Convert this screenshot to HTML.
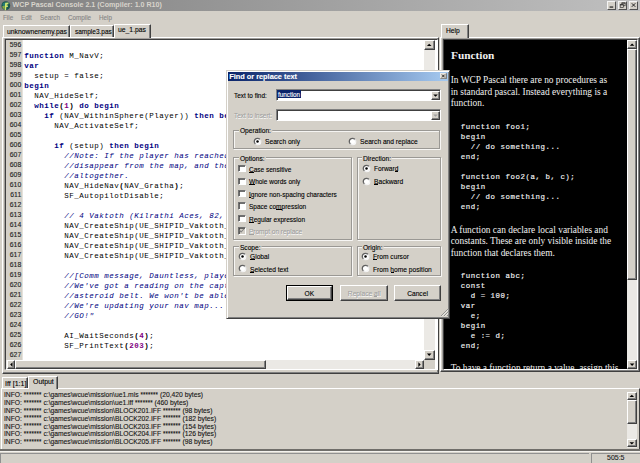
<!DOCTYPE html><html><head><meta charset="utf-8"><style>
*{margin:0;padding:0;box-sizing:border-box}
html,body{width:640px;height:463px;overflow:hidden;background:#d4d0c8;position:relative;font-family:"Liberation Sans",sans-serif}
.a{position:absolute}
.ui{font-family:"Liberation Sans",sans-serif;color:#000;white-space:pre;line-height:1;-webkit-text-stroke:0.12px currentColor}
.track{background:#ebe9e5}
.sbtn{background:#d4d0c8;border-top:1px solid #fff;border-left:1px solid #fff;border-right:1px solid #404040;border-bottom:1px solid #404040;box-shadow:inset -1px -1px 0 #808080}
.code{font-family:"Liberation Mono",monospace;font-size:7.5px;letter-spacing:0.5px;line-height:10px;white-space:pre;color:#000}
.k{color:#000080;font-weight:bold}
.c{color:#000080;font-style:italic}
.n{color:#800080;font-weight:bold}
.p{font-weight:bold}
.dis{color:#a0a0a0;text-shadow:0.5px 0.5px 0 #fff}
.mdis{color:#858585}
.help{font-family:"Liberation Serif",serif;color:#f0f0f0;white-space:pre}
.hcode{font-family:"Liberation Mono",monospace;font-size:7.4px;letter-spacing:0.55px;line-height:10px;color:#f4f4f4;white-space:pre;-webkit-text-stroke:0.15px #f4f4f4}
</style></head><body><svg width="0" height="0" style="position:absolute"><defs><linearGradient id="rg" x1="0" y1="0" x2="1" y2="1"><stop offset="0" stop-color="#505050"/><stop offset="0.45" stop-color="#707070"/><stop offset="0.6" stop-color="#e8e8e8"/><stop offset="1" stop-color="#fff"/></linearGradient></defs></svg><div class="a" style="left:0px;top:0px;width:640px;height:10.5px;background:linear-gradient(to right,#808080,#c0c0c0)"></div>
<svg class="a" style="left:1.2px;top:0.9px" width="11" height="10"><circle cx="4.8" cy="4.7" r="4.4" fill="#1a5550"/><circle cx="3.6" cy="3.6" r="2" fill="#2c8f86" opacity=".7"/><path d="M4.2 1.8 L7.6 1.6 L7.3 3.3 L5.8 3.4 L5.6 4.6 L7.0 4.5 L6.8 6 L5.4 6.1 L5.0 9.2 L3.6 9.2 Z" fill="#d0e870"/><path d="M1.2 5.2 L3.8 4.8 L3.5 8 L1.8 7.4 Z" fill="#a8c040" opacity=".8"/></svg>
<div class="a ui " style="left:12.6px;top:2.44px;font-size:7.1px;transform:scaleX(1.0);transform-origin:0 0;font-weight:bold;color:#d8d4cc;-webkit-text-stroke:0">WCP Pascal Console 2.1 (Compiler: 1.0 R10)</div>
<div class="a" style="left:607.2px;top:1.2px;width:9.3px;height:8.4px;background:#d4d0c8;border-top:1px solid #f4f4f4;border-left:1px solid #f4f4f4;border-right:1px solid #505050;border-bottom:1px solid #505050"></div>
<div class="a" style="left:617.7px;top:1.2px;width:9.3px;height:8.4px;background:#d4d0c8;border-top:1px solid #f4f4f4;border-left:1px solid #f4f4f4;border-right:1px solid #505050;border-bottom:1px solid #505050"></div>
<div class="a" style="left:628.7px;top:1.2px;width:9.3px;height:8.4px;background:#d4d0c8;border-top:1px solid #f4f4f4;border-left:1px solid #f4f4f4;border-right:1px solid #505050;border-bottom:1px solid #505050"></div>
<svg class="a" style="left:607.2px;top:1.2px" width="10" height="9"><rect x="2.6" y="5.5" width="3.6" height="1.1" fill="#101010"/></svg>
<svg class="a" style="left:617.7px;top:1.2px" width="10" height="9"><rect x="3.9" y="1.9" width="3.2" height="2.9" fill="none" stroke="#202020" stroke-width="0.6"/><rect x="3.6" y="1.7" width="3.8" height="0.8" fill="#202020"/><rect x="2.2" y="3.7" width="3.2" height="2.9" fill="#d4d0c8" stroke="#202020" stroke-width="0.6"/><rect x="1.9" y="3.5" width="3.8" height="0.8" fill="#202020"/></svg>
<svg class="a" style="left:628.7px;top:1.2px" width="10" height="9"><path d="M2.8 2.3 L6.3 5.8 M6.3 2.3 L2.8 5.8" stroke="#101010" stroke-width="0.9"/></svg>
<div class="a ui mdis" style="left:3.3px;top:13.80px;font-size:7.4px;transform:scaleX(0.85);transform-origin:0 0;">File</div>
<div class="a ui mdis" style="left:20.6px;top:13.80px;font-size:7.4px;transform:scaleX(0.85);transform-origin:0 0;">Edit</div>
<div class="a ui mdis" style="left:39.8px;top:13.80px;font-size:7.4px;transform:scaleX(0.85);transform-origin:0 0;">Search</div>
<div class="a ui mdis" style="left:67.9px;top:13.80px;font-size:7.4px;transform:scaleX(0.85);transform-origin:0 0;">Compile</div>
<div class="a ui mdis" style="left:98.5px;top:13.80px;font-size:7.4px;transform:scaleX(0.85);transform-origin:0 0;">Help</div>
<div class="a" style="left:2.3px;top:37.2px;width:437px;height:336.5px;border-top:1px solid #fff;border-left:1px solid #fff;border-right:1px solid #404040;border-bottom:1px solid #404040;box-shadow:inset -1px -1px 0 #808080"></div>
<div class="a" style="left:2.5px;top:25.2px;width:67.3px;height:11.8px;background:#d4d0c8;border-top:1px solid #fff;border-left:1px solid #fff;border-right:1px solid #404040;box-shadow:inset -1px 0 0 #808080"></div>
<div class="a ui " style="left:7.0px;top:27.80px;font-size:7.4px;transform:scaleX(0.919);transform-origin:0 0;">unknownenemy.pas</div>
<div class="a" style="left:70.3px;top:25.2px;width:43.5px;height:11.8px;background:#d4d0c8;border-top:1px solid #fff;border-left:1px solid #fff;border-right:1px solid #404040;box-shadow:inset -1px 0 0 #808080"></div>
<div class="a ui " style="left:74.8px;top:27.80px;font-size:7.4px;transform:scaleX(0.877);transform-origin:0 0;">sample3.pas</div>
<div class="a" style="left:113.8px;top:24px;width:37.2px;height:14.2px;background:#d4d0c8;border-top:1px solid #fff;border-left:1px solid #fff;border-right:1px solid #404040;box-shadow:inset -1px 0 0 #808080"></div>
<div class="a ui " style="left:118.1px;top:26.30px;font-size:7.4px;transform:scaleX(0.92);transform-origin:0 0;">ue_1.pas</div>
<div class="a" style="left:5px;top:38.9px;width:433px;height:331.3px;border-top:1px solid #404040;border-left:1px solid #404040;border-right:1px solid #fff;border-bottom:1px solid #fff;background:#fff;box-shadow:-0.6px -0.6px 0 #808080"></div>
<div class="a" style="left:6px;top:39.7px;width:16.6px;height:320.5px;background:#d4d0c8;border-right:1px solid #e4e2dc"></div>
<div class="a ui" style="left:6px;top:39.75px;width:15.2px;text-align:right;font-size:6.8px;line-height:10px;color:#202020">596</div>
<div class="a ui" style="left:6px;top:49.75px;width:15.2px;text-align:right;font-size:6.8px;line-height:10px;color:#202020">597</div>
<div class="a ui" style="left:6px;top:59.75px;width:15.2px;text-align:right;font-size:6.8px;line-height:10px;color:#202020">598</div>
<div class="a ui" style="left:6px;top:69.75px;width:15.2px;text-align:right;font-size:6.8px;line-height:10px;color:#202020">599</div>
<div class="a ui" style="left:6px;top:79.75px;width:15.2px;text-align:right;font-size:6.8px;line-height:10px;color:#202020">600</div>
<div class="a ui" style="left:6px;top:89.75px;width:15.2px;text-align:right;font-size:6.8px;line-height:10px;color:#202020">601</div>
<div class="a ui" style="left:6px;top:99.75px;width:15.2px;text-align:right;font-size:6.8px;line-height:10px;color:#202020">602</div>
<div class="a ui" style="left:6px;top:109.75px;width:15.2px;text-align:right;font-size:6.8px;line-height:10px;color:#202020">603</div>
<div class="a ui" style="left:6px;top:119.75px;width:15.2px;text-align:right;font-size:6.8px;line-height:10px;color:#202020">604</div>
<div class="a ui" style="left:6px;top:129.75px;width:15.2px;text-align:right;font-size:6.8px;line-height:10px;color:#202020">605</div>
<div class="a ui" style="left:6px;top:139.75px;width:15.2px;text-align:right;font-size:6.8px;line-height:10px;color:#202020">606</div>
<div class="a ui" style="left:6px;top:149.75px;width:15.2px;text-align:right;font-size:6.8px;line-height:10px;color:#202020">607</div>
<div class="a ui" style="left:6px;top:159.75px;width:15.2px;text-align:right;font-size:6.8px;line-height:10px;color:#202020">608</div>
<div class="a ui" style="left:6px;top:169.75px;width:15.2px;text-align:right;font-size:6.8px;line-height:10px;color:#202020">609</div>
<div class="a ui" style="left:6px;top:179.75px;width:15.2px;text-align:right;font-size:6.8px;line-height:10px;color:#202020">610</div>
<div class="a ui" style="left:6px;top:189.75px;width:15.2px;text-align:right;font-size:6.8px;line-height:10px;color:#202020">611</div>
<div class="a ui" style="left:6px;top:199.75px;width:15.2px;text-align:right;font-size:6.8px;line-height:10px;color:#202020">612</div>
<div class="a ui" style="left:6px;top:209.75px;width:15.2px;text-align:right;font-size:6.8px;line-height:10px;color:#202020">613</div>
<div class="a ui" style="left:6px;top:219.75px;width:15.2px;text-align:right;font-size:6.8px;line-height:10px;color:#202020">614</div>
<div class="a ui" style="left:6px;top:229.75px;width:15.2px;text-align:right;font-size:6.8px;line-height:10px;color:#202020">615</div>
<div class="a ui" style="left:6px;top:239.75px;width:15.2px;text-align:right;font-size:6.8px;line-height:10px;color:#202020">616</div>
<div class="a ui" style="left:6px;top:249.75px;width:15.2px;text-align:right;font-size:6.8px;line-height:10px;color:#202020">617</div>
<div class="a ui" style="left:6px;top:259.75px;width:15.2px;text-align:right;font-size:6.8px;line-height:10px;color:#202020">618</div>
<div class="a ui" style="left:6px;top:269.75px;width:15.2px;text-align:right;font-size:6.8px;line-height:10px;color:#202020">619</div>
<div class="a ui" style="left:6px;top:279.75px;width:15.2px;text-align:right;font-size:6.8px;line-height:10px;color:#202020">620</div>
<div class="a ui" style="left:6px;top:289.75px;width:15.2px;text-align:right;font-size:6.8px;line-height:10px;color:#202020">621</div>
<div class="a ui" style="left:6px;top:299.75px;width:15.2px;text-align:right;font-size:6.8px;line-height:10px;color:#202020">622</div>
<div class="a ui" style="left:6px;top:309.75px;width:15.2px;text-align:right;font-size:6.8px;line-height:10px;color:#202020">623</div>
<div class="a ui" style="left:6px;top:319.75px;width:15.2px;text-align:right;font-size:6.8px;line-height:10px;color:#202020">624</div>
<div class="a ui" style="left:6px;top:329.75px;width:15.2px;text-align:right;font-size:6.8px;line-height:10px;color:#202020">625</div>
<div class="a ui" style="left:6px;top:339.75px;width:15.2px;text-align:right;font-size:6.8px;line-height:10px;color:#202020">626</div>
<div class="a ui" style="left:6px;top:349.75px;width:15.2px;text-align:right;font-size:6.8px;line-height:10px;color:#202020">627</div>
<div class="a" style="left:23px;top:39.7px;width:401px;height:320.5px;overflow:hidden"><div class="code" style="padding-left:1.2px;padding-top:1.3px;line-height:10px">
<span class="k">function</span> M_NavV;
<span class="k">var</span>
  setup = false;
<span class="k">begin</span>
  NAV_HideSelf;
  <span class="k">while</span><span class="p">(</span><span class="n">1</span><span class="p">)</span> <span class="k">do</span> <span class="k">begin</span>
    <span class="k">if</span> (NAV_WithinSphere(Player)) <span class="k">then</span> <span class="k">begin</span>
      NAV_ActivateSelf;

      <span class="k">if</span> (setup) <span class="k">then</span> <span class="k">begin</span>
        <span class="c">//Note: If the player has reached the nav point, then</span>
        <span class="c">//disappear from the map, and the nav point</span>
        <span class="c">//altogether.</span>
        NAV_HideNav<span class="p">(</span>NAV_Gratha<span class="p">)</span>;
        SF_AutopilotDisable;

        <span class="c">// 4 Vaktoth (Kilrathi Aces, 82, 85, 87, 89)</span>
        NAV_CreateShip(UE_SHIPID_Vaktoth_1, 1);
        NAV_CreateShip(UE_SHIPID_Vaktoth_2, 1);
        NAV_CreateShip(UE_SHIPID_Vaktoth_3, 1);
        NAV_CreateShip(UE_SHIPID_Vaktoth_4, 1);

        <span class="c">//[Comm message, Dauntless, player]</span>
        <span class="c">//We&#x27;ve got a reading on the captain&#x27;s</span>
        <span class="c">//asteroid belt. We won&#x27;t be able to</span>
        <span class="c">//We&#x27;re updating your nav map...</span>
        <span class="c">//GO!&quot;</span>

        AI_WaitSeconds<span class="p">(</span><span class="n">4</span><span class="p">)</span>;
        SF_PrintText<span class="p">(</span><span class="n">203</span><span class="p">)</span>;
</div></div>
<div class="a track" style="left:424.2px;top:39.7px;width:10.4px;height:320.5px;"></div>
<div class="a sbtn" style="left:424.2px;top:39.7px;width:10.4px;height:10px;"></div><svg class="a" style="left:424.2px;top:39.7px" width="10.4" height="10"><polygon points="2.9000000000000004,6.1 7.5,6.1 5.2,3.8" fill="#000"/></svg>
<div class="a sbtn" style="left:424.2px;top:350.3px;width:10.4px;height:9.4px;"></div><svg class="a" style="left:424.2px;top:350.3px" width="10.4" height="9.4"><polygon points="2.9000000000000004,3.6 7.5,3.6 5.2,5.9" fill="#000"/></svg>
<div class="a track" style="left:6px;top:359.7px;width:418.2px;height:9.4px;"></div>
<div class="a sbtn" style="left:6.5px;top:359.7px;width:8.8px;height:9.2px;"></div><svg class="a" style="left:6.5px;top:359.7px" width="8.8" height="9.2"><polygon points="5.5,2.3 5.5,6.8999999999999995 3.2,4.6" fill="#000"/></svg>
<div class="a sbtn" style="left:15.3px;top:359.7px;width:250.5px;height:9.2px;"></div>
<div class="a sbtn" style="left:415.3px;top:359.7px;width:8.9px;height:9.2px;"></div><svg class="a" style="left:415.3px;top:359.7px" width="8.9" height="9.2"><polygon points="3.35,2.3 3.35,6.8999999999999995 5.65,4.6" fill="#000"/></svg>
<div class="a" style="left:424.2px;top:359.7px;width:10.4px;height:9.4px;background:#d4d0c8"></div>
<div class="a" style="left:440.3px;top:37.2px;width:199.5px;height:335px;border-top:1px solid #fff;border-left:1px solid #fff;border-right:1px solid #404040;border-bottom:1px solid #404040;box-shadow:inset -1px -1px 0 #808080"></div>
<div class="a" style="left:440.6px;top:24.2px;width:28.4px;height:14px;background:#d4d0c8;border-top:1px solid #fff;border-left:1px solid #fff;border-right:1px solid #404040;box-shadow:inset -1px 0 0 #808080"></div>
<div class="a ui " style="left:445.5px;top:26.50px;font-size:7.4px;transform:scaleX(0.9);transform-origin:0 0;">Help</div>
<div class="a" style="left:443px;top:38.9px;width:195px;height:331px;border-top:1px solid #404040;border-left:1px solid #404040;border-right:1px solid #fff;border-bottom:1px solid #fff;background:#000;box-shadow:-0.6px -0.6px 0 #808080"></div>
<div class="a" style="left:444px;top:39.7px;width:182.5px;height:330px;overflow:hidden"><div style="position:absolute;left:-444px;top:-39.7px;width:640px;height:463px"><div class="a help" style="left:451px;top:50.3px;font-size:11.3px;font-weight:bold;line-height:1">Function</div><div class="a help" style="left:450.7px;top:76.30px;font-size:9.4px;line-height:1">In WCP Pascal there are no procedures as</div><div class="a help" style="left:450.7px;top:87.80px;font-size:9.4px;line-height:1">in standard pascal. Instead everything is a</div><div class="a help" style="left:450.7px;top:99.30px;font-size:9.4px;line-height:1">function.</div><div class="a hcode" style="left:460.7px;top:121.60px">function foo1;</div><div class="a hcode" style="left:460.7px;top:131.60px">begin</div><div class="a hcode" style="left:460.7px;top:141.60px">  // do something...</div><div class="a hcode" style="left:460.7px;top:151.60px">end;</div><div class="a hcode" style="left:460.7px;top:171.60px">function foo2(a, b, c);</div><div class="a hcode" style="left:460.7px;top:181.60px">begin</div><div class="a hcode" style="left:460.7px;top:191.60px">  // do something...</div><div class="a hcode" style="left:460.7px;top:201.60px">end;</div><div class="a help" style="left:450.7px;top:225.50px;font-size:9.4px;line-height:1">A function can declare local variables and</div><div class="a help" style="left:450.7px;top:237.25px;font-size:9.4px;line-height:1">constants. These are only visible inside the</div><div class="a help" style="left:450.7px;top:249.00px;font-size:9.4px;line-height:1">function that declares them.</div><div class="a hcode" style="left:460.7px;top:271.00px">function abc;</div><div class="a hcode" style="left:460.7px;top:281.00px">const</div><div class="a hcode" style="left:460.7px;top:291.00px">  d = 100;</div><div class="a hcode" style="left:460.7px;top:301.00px">var</div><div class="a hcode" style="left:460.7px;top:311.00px">  e;</div><div class="a hcode" style="left:460.7px;top:321.00px">begin</div><div class="a hcode" style="left:460.7px;top:331.00px">  e := d;</div><div class="a hcode" style="left:460.7px;top:341.00px">end;</div><div class="a help" style="left:450.7px;top:364.40px;font-size:9.4px;line-height:1">To have a function return a value, assign this</div></div></div>
<div class="a track" style="left:626.6px;top:39.7px;width:10.2px;height:330px;"></div>
<div class="a sbtn" style="left:626.6px;top:39.7px;width:10.2px;height:9.4px;"></div><svg class="a" style="left:626.6px;top:39.7px" width="10.2" height="9.4"><polygon points="2.8,5.800000000000001 7.3999999999999995,5.800000000000001 5.1,3.5" fill="#000"/></svg>
<div class="a sbtn" style="left:626.6px;top:49.1px;width:10.2px;height:230.7px;"></div>
<div class="a sbtn" style="left:626.6px;top:359.6px;width:10.2px;height:9.4px;"></div><svg class="a" style="left:626.6px;top:359.6px" width="10.2" height="9.4"><polygon points="2.8,3.6 7.3999999999999995,3.6 5.1,5.9" fill="#000"/></svg>
<div class="a" style="left:0.6px;top:388px;width:639.4px;height:62px;border-top:1px solid #fff;border-left:1px solid #fff;border-right:1px solid #404040"></div>
<div class="a" style="left:1.6px;top:377.2px;width:26.4px;height:11px;background:#d4d0c8;border-top:1px solid #fff;border-left:1px solid #fff;border-right:1px solid #404040;box-shadow:inset -1px 0 0 #808080"></div>
<div class="a ui " style="left:4.9px;top:379.50px;font-size:7.4px;transform:scaleX(0.95);transform-origin:0 0;">Iff [1:1]</div>
<div class="a" style="left:28.4px;top:375.8px;width:29.6px;height:12.8px;background:#d4d0c8;border-top:1px solid #fff;border-left:1px solid #fff;border-right:1px solid #404040;box-shadow:inset -1px 0 0 #808080"></div>
<div class="a ui " style="left:32.8px;top:378.40px;font-size:7.4px;transform:scaleX(0.936);transform-origin:0 0;">Output</div>
<div class="a ui " style="left:3.8px;top:391.10px;font-size:7.4px;transform:scaleX(0.912);transform-origin:0 0;color:#141414">INFO: <span style="font-size:6.6px;letter-spacing:0.2px;position:relative;top:-0.3px">*******</span> c:\games\wcue\mission\ue1.mis <span style="font-size:6.6px;letter-spacing:0.2px;position:relative;top:-0.3px">*******</span> (20,420 bytes)</div>
<div class="a ui " style="left:3.8px;top:398.95px;font-size:7.4px;transform:scaleX(0.912);transform-origin:0 0;color:#141414">INFO: <span style="font-size:6.6px;letter-spacing:0.2px;position:relative;top:-0.3px">*******</span> c:\games\wcue\mission\ue1.iff <span style="font-size:6.6px;letter-spacing:0.2px;position:relative;top:-0.3px">*******</span> (460 bytes)</div>
<div class="a ui " style="left:3.8px;top:406.80px;font-size:7.4px;transform:scaleX(0.912);transform-origin:0 0;color:#141414">INFO: <span style="font-size:6.6px;letter-spacing:0.2px;position:relative;top:-0.3px">*******</span> c:\games\wcue\mission\BLOCK201.IFF <span style="font-size:6.6px;letter-spacing:0.2px;position:relative;top:-0.3px">*******</span> (98 bytes)</div>
<div class="a ui " style="left:3.8px;top:414.65px;font-size:7.4px;transform:scaleX(0.912);transform-origin:0 0;color:#141414">INFO: <span style="font-size:6.6px;letter-spacing:0.2px;position:relative;top:-0.3px">*******</span> c:\games\wcue\mission\BLOCK202.IFF <span style="font-size:6.6px;letter-spacing:0.2px;position:relative;top:-0.3px">*******</span> (182 bytes)</div>
<div class="a ui " style="left:3.8px;top:422.50px;font-size:7.4px;transform:scaleX(0.912);transform-origin:0 0;color:#141414">INFO: <span style="font-size:6.6px;letter-spacing:0.2px;position:relative;top:-0.3px">*******</span> c:\games\wcue\mission\BLOCK203.IFF <span style="font-size:6.6px;letter-spacing:0.2px;position:relative;top:-0.3px">*******</span> (154 bytes)</div>
<div class="a ui " style="left:3.8px;top:430.35px;font-size:7.4px;transform:scaleX(0.912);transform-origin:0 0;color:#141414">INFO: <span style="font-size:6.6px;letter-spacing:0.2px;position:relative;top:-0.3px">*******</span> c:\games\wcue\mission\BLOCK204.IFF <span style="font-size:6.6px;letter-spacing:0.2px;position:relative;top:-0.3px">*******</span> (126 bytes)</div>
<div class="a ui " style="left:3.8px;top:438.20px;font-size:7.4px;transform:scaleX(0.912);transform-origin:0 0;color:#141414">INFO: <span style="font-size:6.6px;letter-spacing:0.2px;position:relative;top:-0.3px">*******</span> c:\games\wcue\mission\BLOCK205.IFF <span style="font-size:6.6px;letter-spacing:0.2px;position:relative;top:-0.3px">*******</span> (98 bytes)</div>
<div class="a track" style="left:627.3px;top:392px;width:9.6px;height:55.5px;"></div>
<div class="a sbtn" style="left:627.3px;top:392px;width:9.6px;height:8px;"></div><svg class="a" style="left:627.3px;top:392px" width="9.6" height="8"><polygon points="2.5,5.1 7.1,5.1 4.8,2.8" fill="#000"/></svg>
<div class="a sbtn" style="left:627.3px;top:400px;width:9.6px;height:24.2px;"></div>
<div class="a sbtn" style="left:627.3px;top:438.8px;width:9.6px;height:8.5px;"></div><svg class="a" style="left:627.3px;top:438.8px" width="9.6" height="8.5"><polygon points="2.5,3.15 7.1,3.15 4.8,5.45" fill="#000"/></svg>
<div class="a" style="left:0px;top:449.2px;width:640px;height:1.8px;background:#706e6a"></div>
<div class="a" style="left:0px;top:451.2px;width:640px;height:1px;background:#f4f2ee"></div>
<div class="a" style="left:0.3px;top:452.6px;width:589px;height:11px;border-top:1px solid #909090;border-left:1px solid #909090"></div>
<div class="a" style="left:590.8px;top:452.6px;width:50px;height:11px;border-top:1px solid #909090;border-left:1px solid #909090"></div>
<div class="a ui " style="left:606.9px;top:454.10px;font-size:7.4px;transform:scaleX(0.945);transform-origin:0 0;color:#202020">505:5</div>
<div class="a" style="left:226px;top:69.7px;width:224px;height:249px;background:#d4d0c8;border-top:1px solid #d4d0c8;border-left:1px solid #d4d0c8;border-right:1px solid #404040;border-bottom:1px solid #404040;box-shadow:inset 1px 1px 0 #fff,inset -1px -1px 0 #808080"></div><div class="a" style="left:228.2px;top:71.7px;width:219.5px;height:9.2px;background:linear-gradient(to right,#0a246a,#a6caf0)"></div><div class="a ui " style="left:229.2px;top:72.82px;font-size:7.37px;transform:scaleX(1.0);transform-origin:0 0;font-weight:bold;color:#fff">Find or replace text</div><svg class="a" style="left:440.4px;top:72.6px" width="7" height="6.5"><rect x="0" y="0" width="6.6" height="6.1" fill="#d4d0c8"/><path d="M0.3 5.9 V0.3 H6.4" stroke="#fff" stroke-width="0.6" fill="none"/><path d="M0.2 5.8 H6.3 V0.2" stroke="#404040" stroke-width="0.7" fill="none"/><path d="M2 1.7 L4.6 4.3 M4.6 1.7 L2 4.3" stroke="#000" stroke-width="0.75"/></svg><div class="a ui " style="left:234.2px;top:91.80px;font-size:7.4px;transform:scaleX(0.867);transform-origin:0 0;">Text to find:</div><div class="a ui dis" style="left:234.2px;top:112.30px;font-size:7.4px;transform:scaleX(0.867);transform-origin:0 0;">Text to insert:</div><div class="a" style="left:275.8px;top:89.2px;width:165.5px;height:11.7px;background:#fff;border-top:1px solid #808080;border-left:1px solid #808080;border-right:1px solid #fff;border-bottom:1px solid #fff;box-shadow:inset 1px 1px 0 #404040"></div><div class="a" style="left:277.4px;top:90.3px;width:23.6px;height:8.2px;background:#0a246a"></div><div class="a ui " style="left:277.8px;top:91.00px;font-size:7.4px;transform:scaleX(0.855);transform-origin:0 0;color:#fff">function</div><div class="a sbtn" style="left:431.2px;top:90.6px;width:9.1px;height:9.1px;"></div><svg class="a" style="left:431.2px;top:90.6px" width="9.1" height="9.1"><polygon points="2.25,3.4499999999999997 6.85,3.4499999999999997 4.55,5.75" fill="#000"/></svg><div class="a" style="left:275.8px;top:109.4px;width:165.5px;height:11.7px;background:#fff;border-top:1px solid #808080;border-left:1px solid #808080;border-right:1px solid #fff;border-bottom:1px solid #fff;box-shadow:inset 1px 1px 0 #404040"></div><div class="a sbtn" style="left:431.2px;top:110.8px;width:9.1px;height:9.1px;"></div><svg class="a" style="left:431.2px;top:110.8px" width="9.1" height="9.1"><polygon points="2.25,3.4499999999999997 6.85,3.4499999999999997 4.55,5.75" fill="#a0a0a0"/></svg><div class="a" style="left:233.3px;top:130.2px;width:207.2px;height:19.100000000000023px;border:1px solid #9a9894;box-shadow:0.8px 0.8px 0 #fff,inset 0.8px 0.8px 0 #fff"></div><div class="a ui " style="left:238.9px;top:127.40px;font-size:7.4px;transform:scaleX(0.9);transform-origin:0 0;background:#d4d0c8;padding:0 1px">Operation:</div><div class="a" style="left:233.3px;top:157.3px;width:119.19999999999999px;height:83.0px;border:1px solid #9a9894;box-shadow:0.8px 0.8px 0 #fff,inset 0.8px 0.8px 0 #fff"></div><div class="a ui " style="left:238.9px;top:154.80px;font-size:7.4px;transform:scaleX(0.9);transform-origin:0 0;background:#d4d0c8;padding:0 1px">Options:</div><div class="a" style="left:356.8px;top:157.3px;width:84.0px;height:83.0px;border:1px solid #9a9894;box-shadow:0.8px 0.8px 0 #fff,inset 0.8px 0.8px 0 #fff"></div><div class="a ui " style="left:362.40000000000003px;top:154.80px;font-size:7.4px;transform:scaleX(0.9);transform-origin:0 0;background:#d4d0c8;padding:0 1px">Direction:</div><div class="a" style="left:233.3px;top:246.3px;width:119.19999999999999px;height:29.899999999999977px;border:1px solid #9a9894;box-shadow:0.8px 0.8px 0 #fff,inset 0.8px 0.8px 0 #fff"></div><div class="a ui " style="left:238.9px;top:243.90px;font-size:7.4px;transform:scaleX(0.9);transform-origin:0 0;background:#d4d0c8;padding:0 1px">Scope:</div><div class="a" style="left:356.8px;top:246.3px;width:84.0px;height:29.899999999999977px;border:1px solid #9a9894;box-shadow:0.8px 0.8px 0 #fff,inset 0.8px 0.8px 0 #fff"></div><div class="a ui " style="left:362.40000000000003px;top:243.90px;font-size:7.4px;transform:scaleX(0.9);transform-origin:0 0;background:#d4d0c8;padding:0 1px">Origin:</div><svg class="a" style="left:252.89999999999998px;top:136.5px" width="9" height="9"><circle cx="4.5" cy="4.5" r="3.0" fill="#fff"/><circle cx="4.5" cy="4.5" r="3.2" fill="none" stroke="url(#rg)" stroke-width="1.3"/><circle cx="4.5" cy="4.5" r="1.25" fill="#000"/></svg><div class="a ui " style="left:265.0px;top:138.10px;font-size:7.4px;transform:scaleX(0.9);transform-origin:0 0;">Search only</div><svg class="a" style="left:347.9px;top:136.5px" width="9" height="9"><circle cx="4.5" cy="4.5" r="3.0" fill="#fff"/><circle cx="4.5" cy="4.5" r="3.2" fill="none" stroke="url(#rg)" stroke-width="1.3"/></svg><div class="a ui " style="left:360.0px;top:138.10px;font-size:7.4px;transform:scaleX(0.9);transform-origin:0 0;">Search and replace</div><div class="a" style="left:238.4px;top:165.1px;width:7.2px;height:7.2px;background:#fff;border-top:1px solid #707070;border-left:1px solid #707070;border-right:1px solid #fff;border-bottom:1px solid #fff;box-shadow:inset 0.8px 0.8px 0 #404040"></div><div class="a ui " style="left:249.3px;top:165.80px;font-size:7.4px;transform:scaleX(0.88);transform-origin:0 0;">Case sensitive</div><div class="a" style="left:249.30px;top:171.75px;width:4.70px;height:0.75px;background:#000"></div><div class="a" style="left:238.4px;top:177.54999999999998px;width:7.2px;height:7.2px;background:#fff;border-top:1px solid #707070;border-left:1px solid #707070;border-right:1px solid #fff;border-bottom:1px solid #fff;box-shadow:inset 0.8px 0.8px 0 #404040"></div><div class="a ui " style="left:249.3px;top:178.25px;font-size:7.4px;transform:scaleX(0.88);transform-origin:0 0;">Whole words only</div><div class="a" style="left:249.30px;top:184.20px;width:6.15px;height:0.75px;background:#000"></div><div class="a" style="left:238.4px;top:190.0px;width:7.2px;height:7.2px;background:#fff;border-top:1px solid #707070;border-left:1px solid #707070;border-right:1px solid #fff;border-bottom:1px solid #fff;box-shadow:inset 0.8px 0.8px 0 #404040"></div><div class="a ui " style="left:249.3px;top:190.70px;font-size:7.4px;transform:scaleX(0.88);transform-origin:0 0;">Ignore non-spacing characters</div><div class="a" style="left:249.30px;top:196.65px;width:1.81px;height:0.75px;background:#000"></div><div class="a" style="left:238.4px;top:202.45px;width:7.2px;height:7.2px;background:#fff;border-top:1px solid #707070;border-left:1px solid #707070;border-right:1px solid #fff;border-bottom:1px solid #fff;box-shadow:inset 0.8px 0.8px 0 #404040"></div><div class="a ui " style="left:249.3px;top:203.15px;font-size:7.4px;transform:scaleX(0.88);transform-origin:0 0;">Space compression</div><div class="a" style="left:276.45px;top:209.10px;width:5.42px;height:0.75px;background:#000"></div><div class="a" style="left:238.4px;top:214.9px;width:7.2px;height:7.2px;background:#fff;border-top:1px solid #707070;border-left:1px solid #707070;border-right:1px solid #fff;border-bottom:1px solid #fff;box-shadow:inset 0.8px 0.8px 0 #404040"></div><div class="a ui " style="left:249.3px;top:215.60px;font-size:7.4px;transform:scaleX(0.88);transform-origin:0 0;">Regular expression</div><div class="a" style="left:249.30px;top:221.55px;width:4.70px;height:0.75px;background:#000"></div><div class="a" style="left:238.4px;top:227.35px;width:7.2px;height:7.2px;background:#d4d0c8;border-top:1px solid #707070;border-left:1px solid #707070;border-right:1px solid #fff;border-bottom:1px solid #fff;box-shadow:inset 0.8px 0.8px 0 #404040"></div><svg class="a" style="left:238.4px;top:227.35px" width="8" height="8"><path d="M1.6 3.4 L3.1 5 L5.8 2" stroke="#808080" stroke-width="1.1" fill="none"/></svg><div class="a ui dis" style="left:249.3px;top:228.05px;font-size:7.4px;transform:scaleX(0.88);transform-origin:0 0;">Prompt on replace</div><div class="a" style="left:249.30px;top:234.00px;width:4.34px;height:0.75px;background:#a0a0a0"></div><svg class="a" style="left:361.8px;top:163.7px" width="9" height="9"><circle cx="4.5" cy="4.5" r="3.0" fill="#fff"/><circle cx="4.5" cy="4.5" r="3.2" fill="none" stroke="url(#rg)" stroke-width="1.3"/><circle cx="4.5" cy="4.5" r="1.25" fill="#000"/></svg><div class="a ui " style="left:373.90000000000003px;top:165.30px;font-size:7.4px;transform:scaleX(0.9);transform-origin:0 0;">Forward</div><div class="a" style="left:394.62px;top:171.25px;width:3.70px;height:0.75px;background:#000"></div><svg class="a" style="left:361.8px;top:176.5px" width="9" height="9"><circle cx="4.5" cy="4.5" r="3.0" fill="#fff"/><circle cx="4.5" cy="4.5" r="3.2" fill="none" stroke="url(#rg)" stroke-width="1.3"/></svg><div class="a ui " style="left:373.90000000000003px;top:178.10px;font-size:7.4px;transform:scaleX(0.9);transform-origin:0 0;">Backward</div><div class="a" style="left:373.90px;top:184.05px;width:4.44px;height:0.75px;background:#000"></div><svg class="a" style="left:237.8px;top:251.7px" width="9" height="9"><circle cx="4.5" cy="4.5" r="3.0" fill="#fff"/><circle cx="4.5" cy="4.5" r="3.2" fill="none" stroke="url(#rg)" stroke-width="1.3"/><circle cx="4.5" cy="4.5" r="1.25" fill="#000"/></svg><div class="a ui " style="left:249.9px;top:253.30px;font-size:7.4px;transform:scaleX(0.9);transform-origin:0 0;">Global</div><div class="a" style="left:249.90px;top:259.25px;width:5.18px;height:0.75px;background:#000"></div><svg class="a" style="left:237.8px;top:264.0px" width="9" height="9"><circle cx="4.5" cy="4.5" r="3.0" fill="#fff"/><circle cx="4.5" cy="4.5" r="3.2" fill="none" stroke="url(#rg)" stroke-width="1.3"/></svg><div class="a ui " style="left:249.9px;top:265.60px;font-size:7.4px;transform:scaleX(0.9);transform-origin:0 0;">Selected text</div><div class="a" style="left:249.90px;top:271.55px;width:4.44px;height:0.75px;background:#000"></div><svg class="a" style="left:361.3px;top:251.7px" width="9" height="9"><circle cx="4.5" cy="4.5" r="3.0" fill="#fff"/><circle cx="4.5" cy="4.5" r="3.2" fill="none" stroke="url(#rg)" stroke-width="1.3"/><circle cx="4.5" cy="4.5" r="1.25" fill="#000"/></svg><div class="a ui " style="left:373.40000000000003px;top:253.30px;font-size:7.4px;transform:scaleX(0.9);transform-origin:0 0;">From cursor</div><div class="a" style="left:373.40px;top:259.25px;width:4.07px;height:0.75px;background:#000"></div><svg class="a" style="left:361.3px;top:264.0px" width="9" height="9"><circle cx="4.5" cy="4.5" r="3.0" fill="#fff"/><circle cx="4.5" cy="4.5" r="3.2" fill="none" stroke="url(#rg)" stroke-width="1.3"/></svg><div class="a ui " style="left:373.40000000000003px;top:265.60px;font-size:7.4px;transform:scaleX(0.9);transform-origin:0 0;">From home position</div><div class="a" style="left:390.79px;top:271.55px;width:3.70px;height:0.75px;background:#000"></div><div class="a" style="left:286px;top:285.3px;width:47px;height:15.5px;border:1px solid #000;background:#d4d0c8"><div style="position:absolute;left:0;top:0;right:0;bottom:0;border-top:1px solid #fff;border-left:1px solid #fff;border-right:1px solid #404040;border-bottom:1px solid #404040;box-shadow:inset -1px -1px 0 #808080"></div></div><div class="a ui " style="left:286px;top:290.20px;width:47px;text-align:center;font-size:7.4px;"><span style="display:inline-block;transform:scaleX(0.9);transform-origin:50% 0">OK</span></div><div class="a sbtn" style="left:340px;top:285.3px;width:47.8px;height:15.5px;"></div><div class="a ui dis" style="left:340px;top:290.20px;width:47.8px;text-align:center;font-size:7.4px;"><span style="display:inline-block;transform:scaleX(0.9);transform-origin:50% 0">Replace all</span></div><div class="a" style="left:373.71px;top:296.15px;width:3.70px;height:0.75px;background:#a0a0a0"></div><div class="a sbtn" style="left:394px;top:285.3px;width:47px;height:15.5px;"></div><div class="a ui " style="left:394px;top:290.20px;width:47px;text-align:center;font-size:7.4px;"><span style="display:inline-block;transform:scaleX(0.9);transform-origin:50% 0">Cancel</span></div><svg class="a" style="left:439px;top:307px" width="10" height="10"><path d="M9 2 L2 9 M9 5 L5 9 M9 8 L8 9" stroke="#808080" stroke-width="0.8"/><path d="M9.6 2.6 L2.6 9.6 M9.6 5.6 L5.6 9.6" stroke="#fff" stroke-width="0.6"/></svg></body></html>
